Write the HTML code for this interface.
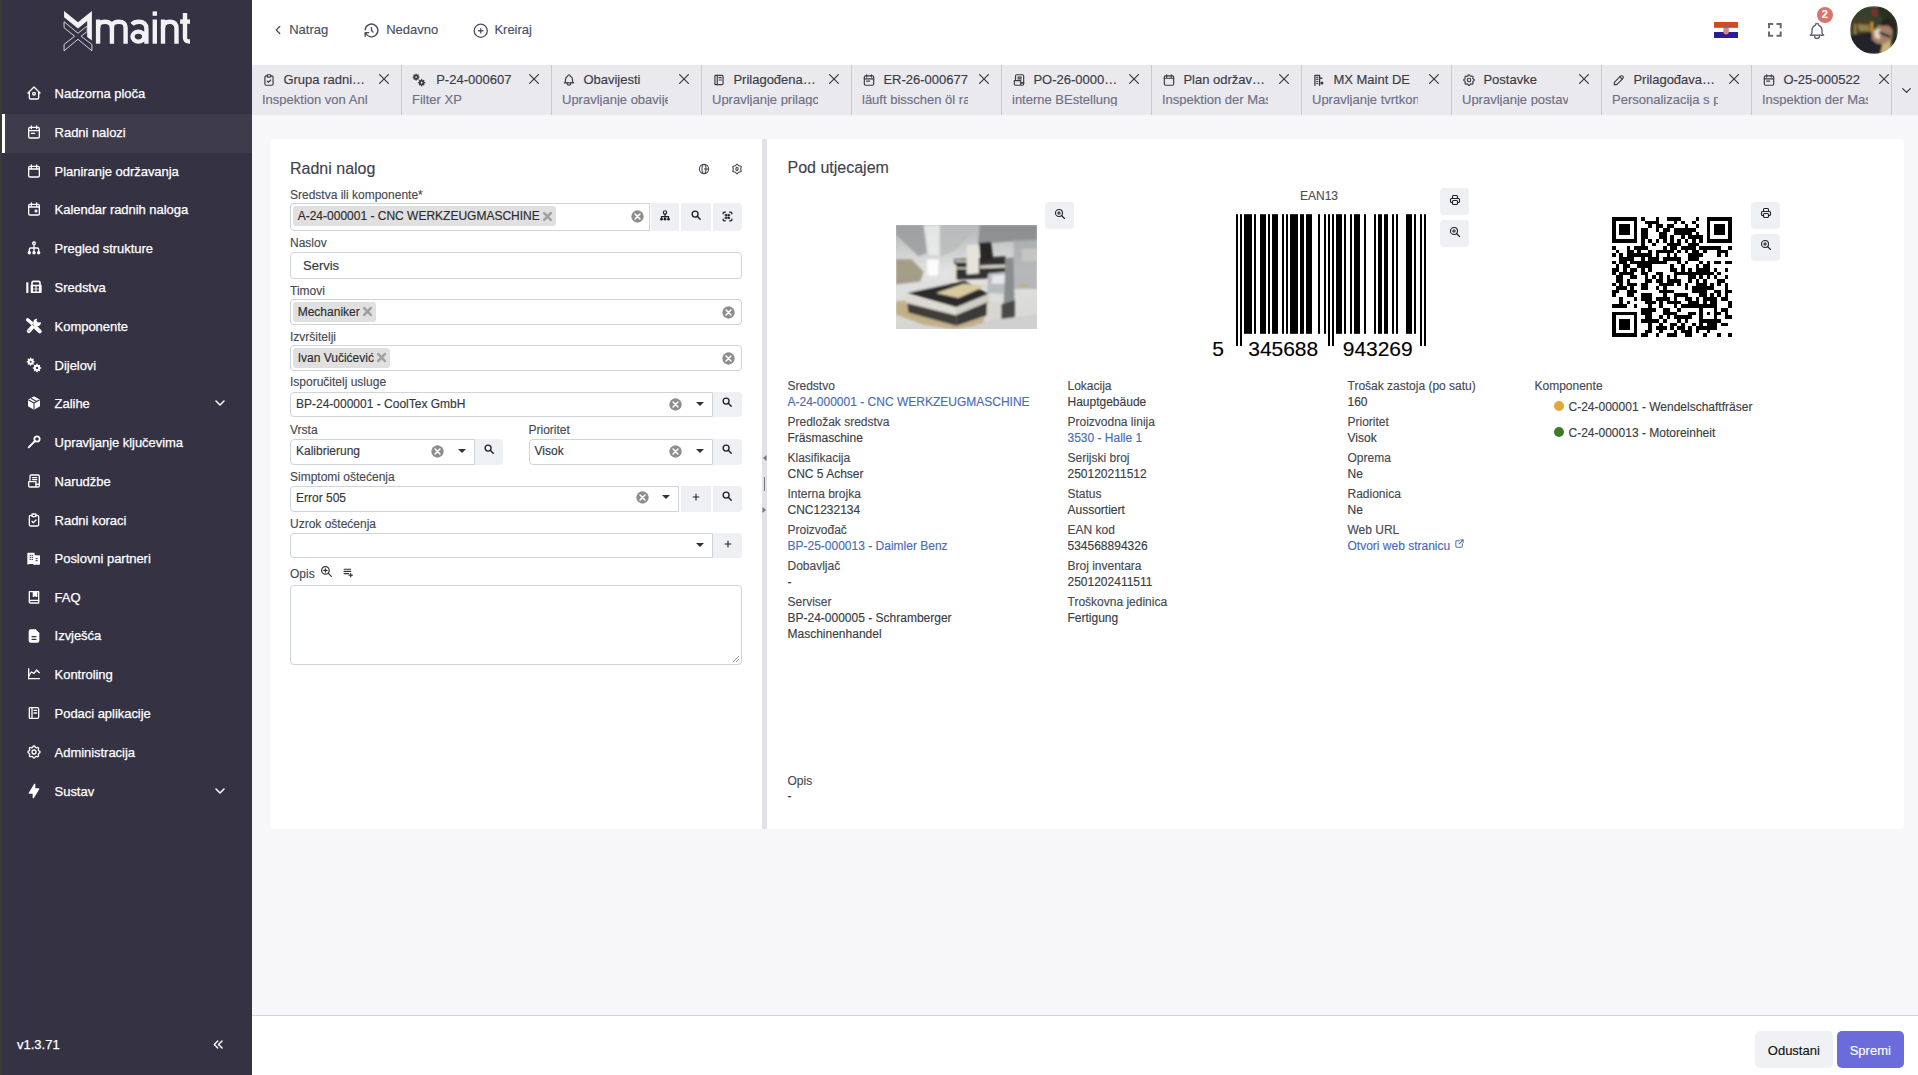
<!DOCTYPE html><html><head><meta charset="utf-8"><title>Radni nalog</title><style>
*{box-sizing:border-box;margin:0;padding:0}
html,body{width:1918px;height:1075px;overflow:hidden;background:#f7f7f9;font-family:"Liberation Sans",sans-serif}
.a{position:absolute}
.t{position:absolute;white-space:nowrap;-webkit-text-stroke:0.15px currentColor}
svg{overflow:visible}
</style></head><body><div class="a" style="left:252.00px;top:0.00px;width:1666.00px;height:65.00px;background:#fff"></div><svg class="a" style="left:271.00px;top:23.30px;" width="14.00" height="14.00" viewBox="0 0 24 24" ><g fill="none" stroke="#4a4e62" stroke-width="2.2" stroke-linecap="round" stroke-linejoin="round"><path d="M15 6l-6 6 6 6"/></g></svg><div class="t " style="left:289.20px;top:23.10px;font-size:13px;line-height:13px;color:#4a4e62;">Natrag</div><svg class="a" style="left:363.00px;top:21.50px;" width="17.00" height="17.00" viewBox="0 0 24 24" ><g fill="none" stroke="#4a4e62" stroke-width="2" stroke-linecap="round" stroke-linejoin="round"><path d="M12 8v4l2 2"/><path d="M3.05 11a9 9 0 1 1 .5 4m-.5 5v-5h5"/></g></svg><div class="t " style="left:386.20px;top:23.10px;font-size:13px;line-height:13px;color:#4a4e62;">Nedavno</div><svg class="a" style="left:471.50px;top:21.50px;" width="17.50" height="17.50" viewBox="0 0 24 24" ><g fill="none" stroke="#4a4e62" stroke-width="1.8" stroke-linecap="round" stroke-linejoin="round"><circle cx="12" cy="12" r="9"/><path d="M9 12h6M12 9v6"/></g></svg><div class="t " style="left:494.40px;top:23.10px;font-size:13px;line-height:13px;color:#4a4e62;">Kreiraj</div><svg class="a" style="left:1714.00px;top:22.00px;" width="24.00" height="16.00" viewBox="0 0 24 16" ><rect x="0" y="0" width="24" height="5.9" fill="#d24a22"/><rect x="0" y="5.9" width="24" height="4.1" fill="#fff"/><rect x="0" y="10" width="24" height="6" fill="#2b1c98"/><path d="M9.4 5.6h5.4v4.2a2.7 2.7 0 0 1-5.4 0z" fill="#e0857a"/><rect x="9.2" y="4.3" width="5.8" height="1.5" rx="0.5" fill="#5a6fb0"/></svg><svg class="a" style="left:1768.00px;top:23.30px;" width="13.70" height="13.70" viewBox="0 0 13.7 13.7" ><path d="M1 5.2V1h4.2M8.5 1h4.2v4.2M12.7 8.5v4.2H8.5M5.2 12.7H1V8.5" fill="none" stroke="#656878" stroke-width="2"/></svg><svg class="a" style="left:1807.00px;top:20.50px;" width="20.00" height="20.00" viewBox="0 0 24 24" ><g fill="none" stroke="#656878" stroke-width="1.7" stroke-linecap="round" stroke-linejoin="round"><path d="M10 5a2 2 0 1 1 4 0 7 7 0 0 1 4 6v3a4 4 0 0 0 2 3H4a4 4 0 0 0 2-3v-3a7 7 0 0 1 4-6"/><path d="M9 17v1a3 3 0 0 0 6 0v-1"/></g></svg><div class="a" style="left:1816.80px;top:6.60px;width:16.60px;height:16.60px;background:#d8746b;border-radius:50%"></div><div class="t " style="left:1821.80px;top:8.99px;font-size:11px;line-height:11px;color:#fff;font-weight:bold">2</div><svg class="a" style="left:1850.10px;top:5.90px;" width="48.00" height="48.00" viewBox="0 0 48 48" ><defs><clipPath id="avc"><circle cx="24" cy="24" r="24"/></clipPath><filter id="avb" x="-10%" y="-10%" width="120%" height="120%"><feGaussianBlur stdDeviation="1.3"/></filter></defs><g clip-path="url(#avc)"><g filter="url(#avb)"><path d="M0.0 0.0 L47.9 0.0 L47.9 27.3 L0.0 27.3Z" fill="#34402f"/><path d="M27.1 0.0 L47.9 0.0 L47.9 19.5 L32.3 14.3Z" fill="#26301f"/><path d="M0.0 13.3 L20.8 11.7 L21.9 28.4 L0.0 29.9Z" fill="#4b3e25"/><path d="M4.2 18.0 L6.2 18.0 L6.2 28.4 L4.2 28.4Z" fill="#9c8a4e"/><path d="M7.8 18.0 L19.8 19.0 L19.8 25.3 L8.9 25.3Z" fill="#8f7f48"/><path d="M20.7 15.9 L23.0 15.9 L23.0 26.3 L20.7 26.3Z" fill="#d89a2a"/><path d="M21.4 3.9 L26.6 2.3 L27.1 10.2 L22.9 9.6Z" fill="#8a2a2a"/><path d="M40.1 22.1 L47.9 19.5 L47.9 43.0 L40.1 43.0Z" fill="#1f3020"/><path d="M29.2 35.7 L40.6 32.6 L40.6 47.7 L29.2 48.2Z" fill="#c9b47c"/><path d="M0.0 29.4 L20.8 26.3 L25.0 32.6 L32.3 38.8 L30.2 48.2 L0.0 48.2Z" fill="#23242b"/><path d="M21.9 25.3 L29.2 19.0 L37.5 18.5 L42.7 23.2 L41.7 32.6 L35.4 37.8 L27.1 37.8 L21.9 33.6Z" fill="#a4806a"/><path d="M24.0 25.3 L29.2 22.1 L31.2 27.3 L29.2 33.6 L25.0 31.5Z" fill="#e5d2bf"/><path d="M29.2 18.0 L35.4 12.8 L42.7 13.3 L46.9 19.5 L45.8 25.3 L42.7 24.2 L38.5 19.5 L31.2 20.1Z" fill="#2b221e"/><path d="M29.2 25.3 L40.6 29.4 L40.1 32.0 L29.2 27.9Z" fill="#2a2a2a"/></g></g></svg><div class="a" style="left:252.00px;top:65.00px;width:1666.00px;height:49.50px;background:#e9e9ee"></div><div class="a" style="left:252px;top:65px;width:150px;height:50px;overflow:hidden"><svg class="a" style="left:10.00px;top:7.60px;" width="14.00" height="14.00" viewBox="0 0 24 24" ><g fill="none" stroke="#3b3b46" stroke-width="2" stroke-linecap="round" stroke-linejoin="round"><path d="M9 5H7a2 2 0 0 0-2 2v12a2 2 0 0 0 2 2h10a2 2 0 0 0 2-2V7a2 2 0 0 0-2-2h-2"/><rect x="9" y="3" width="6" height="4" rx="1"/><path d="M9 14l2 2 4-4"/></g></svg><div class="t " style="left:31.40px;top:7.80px;font-size:13px;line-height:13px;color:#3b3b46;">Grupa radni…</div><svg class="a" style="left:126.80px;top:8.80px;" width="10.00" height="10.00" viewBox="0 0 10 10" ><path d="M0.6 0.6L9.4 9.4M9.4 0.6L0.6 9.4" stroke="#3b3b46" stroke-width="1.25" stroke-linecap="round"/></svg><div class="t" style="left:10px;top:27.60px;width:106px;overflow:hidden;font-size:13px;line-height:13px;color:#6e6e86">Inspektion von Anl</div></div><div class="a" style="left:401.00px;top:65.00px;width:1.00px;height:49.50px;background:#c9c9d1"></div><div class="a" style="left:402px;top:65px;width:150px;height:50px;overflow:hidden"><svg class="a" style="left:10.00px;top:7.60px;" width="14.00" height="14.00" viewBox="0 0 24 24" ><g fill="none" stroke="#3b3b46" stroke-width="2" stroke-linecap="round" stroke-linejoin="round"><circle cx="7" cy="7" r="3" stroke-width="3"/><path d="M7 2v1.5M7 10.5V12M2 7h1.5M10.5 7H12M3.5 3.5l1 1M9.5 9.5l1 1M3.5 10.5l1-1M9.5 4.5l1-1" stroke-width="2.2"/><circle cx="16.5" cy="16.5" r="3.2" stroke-width="3"/><path d="M16.5 11v1.5M16.5 20.5V22M11 16.5h1.5M20.5 16.5H22M12.8 12.8l1 1M19.2 19.2l1 1M12.8 20.2l1-1M19.2 13.8l1-1" stroke-width="2.2"/></g></svg><div class="t " style="left:34.20px;top:7.80px;font-size:13px;line-height:13px;color:#3b3b46;">P-24-000607</div><svg class="a" style="left:126.80px;top:8.80px;" width="10.00" height="10.00" viewBox="0 0 10 10" ><path d="M0.6 0.6L9.4 9.4M9.4 0.6L0.6 9.4" stroke="#3b3b46" stroke-width="1.25" stroke-linecap="round"/></svg><div class="t" style="left:10px;top:27.60px;width:106px;overflow:hidden;font-size:13px;line-height:13px;color:#6e6e86">Filter XP</div></div><div class="a" style="left:551.00px;top:65.00px;width:1.00px;height:49.50px;background:#c9c9d1"></div><div class="a" style="left:552px;top:65px;width:150px;height:50px;overflow:hidden"><svg class="a" style="left:10.00px;top:7.60px;" width="14.00" height="14.00" viewBox="0 0 24 24" ><g fill="none" stroke="#3b3b46" stroke-width="2" stroke-linecap="round" stroke-linejoin="round"><path d="M10 5a2 2 0 1 1 4 0 7 7 0 0 1 4 6v3a4 4 0 0 0 2 3H4a4 4 0 0 0 2-3v-3a7 7 0 0 1 4-6"/><path d="M9 17v1a3 3 0 0 0 6 0v-1"/></g></svg><div class="t " style="left:31.40px;top:7.80px;font-size:13px;line-height:13px;color:#3b3b46;">Obavijesti</div><svg class="a" style="left:126.80px;top:8.80px;" width="10.00" height="10.00" viewBox="0 0 10 10" ><path d="M0.6 0.6L9.4 9.4M9.4 0.6L0.6 9.4" stroke="#3b3b46" stroke-width="1.25" stroke-linecap="round"/></svg><div class="t" style="left:10px;top:27.60px;width:106px;overflow:hidden;font-size:13px;line-height:13px;color:#6e6e86">Upravljanje obavije</div></div><div class="a" style="left:701.00px;top:65.00px;width:1.00px;height:49.50px;background:#c9c9d1"></div><div class="a" style="left:702px;top:65px;width:150px;height:50px;overflow:hidden"><svg class="a" style="left:10.00px;top:7.60px;" width="14.00" height="14.00" viewBox="0 0 24 24" ><g fill="none" stroke="#3b3b46" stroke-width="2" stroke-linecap="round" stroke-linejoin="round"><path d="M6 4h11a2 2 0 0 1 2 2v12a2 2 0 0 1-2 2H6a1 1 0 0 1-1-1V5a1 1 0 0 1 1-1z"/><path d="M9 4v16M12 8h4M12 12h4"/></g></svg><div class="t " style="left:31.40px;top:7.80px;font-size:13px;line-height:13px;color:#3b3b46;">Prilagođena…</div><svg class="a" style="left:126.80px;top:8.80px;" width="10.00" height="10.00" viewBox="0 0 10 10" ><path d="M0.6 0.6L9.4 9.4M9.4 0.6L0.6 9.4" stroke="#3b3b46" stroke-width="1.25" stroke-linecap="round"/></svg><div class="t" style="left:10px;top:27.60px;width:106px;overflow:hidden;font-size:13px;line-height:13px;color:#6e6e86">Upravljanje prilagc</div></div><div class="a" style="left:851.00px;top:65.00px;width:1.00px;height:49.50px;background:#c9c9d1"></div><div class="a" style="left:852px;top:65px;width:150px;height:50px;overflow:hidden"><svg class="a" style="left:10.00px;top:7.60px;" width="14.00" height="14.00" viewBox="0 0 24 24" ><g fill="none" stroke="#3b3b46" stroke-width="2" stroke-linecap="round" stroke-linejoin="round"><rect x="4" y="5" width="16" height="16" rx="2"/><path d="M16 3v4M8 3v4M4 10h16M8 14h5"/></g></svg><div class="t " style="left:31.40px;top:7.80px;font-size:13px;line-height:13px;color:#3b3b46;">ER-26-000677</div><svg class="a" style="left:126.80px;top:8.80px;" width="10.00" height="10.00" viewBox="0 0 10 10" ><path d="M0.6 0.6L9.4 9.4M9.4 0.6L0.6 9.4" stroke="#3b3b46" stroke-width="1.25" stroke-linecap="round"/></svg><div class="t" style="left:10px;top:27.60px;width:106px;overflow:hidden;font-size:13px;line-height:13px;color:#6e6e86">läuft bisschen öl ra</div></div><div class="a" style="left:1001.00px;top:65.00px;width:1.00px;height:49.50px;background:#c9c9d1"></div><div class="a" style="left:1002px;top:65px;width:150px;height:50px;overflow:hidden"><svg class="a" style="left:10.00px;top:7.60px;" width="14.00" height="14.00" viewBox="0 0 24 24" ><g fill="none" stroke="#3b3b46" stroke-width="2" stroke-linecap="round" stroke-linejoin="round"><path d="M17 17h3V5a2 2 0 0 0-2-2H8a2 2 0 0 0-2 2v6"/><path d="M4 13h11v6a2 2 0 0 1-2 2H6a2 2 0 0 1-2-2z"/><path d="M10 7h6M10 10h6"/><path d="M15 17h5v2a2 2 0 0 1-2 2h-3"/></g></svg><div class="t " style="left:31.40px;top:7.80px;font-size:13px;line-height:13px;color:#3b3b46;">PO-26-0000…</div><svg class="a" style="left:126.80px;top:8.80px;" width="10.00" height="10.00" viewBox="0 0 10 10" ><path d="M0.6 0.6L9.4 9.4M9.4 0.6L0.6 9.4" stroke="#3b3b46" stroke-width="1.25" stroke-linecap="round"/></svg><div class="t" style="left:10px;top:27.60px;width:106px;overflow:hidden;font-size:13px;line-height:13px;color:#6e6e86">interne BEstellung</div></div><div class="a" style="left:1151.00px;top:65.00px;width:1.00px;height:49.50px;background:#c9c9d1"></div><div class="a" style="left:1152px;top:65px;width:150px;height:50px;overflow:hidden"><svg class="a" style="left:10.00px;top:7.60px;" width="14.00" height="14.00" viewBox="0 0 24 24" ><g fill="none" stroke="#3b3b46" stroke-width="2" stroke-linecap="round" stroke-linejoin="round"><rect x="4" y="5" width="16" height="16" rx="2"/><path d="M16 3v4M8 3v4M4 9h16"/></g></svg><div class="t " style="left:31.40px;top:7.80px;font-size:13px;line-height:13px;color:#3b3b46;">Plan održav…</div><svg class="a" style="left:126.80px;top:8.80px;" width="10.00" height="10.00" viewBox="0 0 10 10" ><path d="M0.6 0.6L9.4 9.4M9.4 0.6L0.6 9.4" stroke="#3b3b46" stroke-width="1.25" stroke-linecap="round"/></svg><div class="t" style="left:10px;top:27.60px;width:106px;overflow:hidden;font-size:13px;line-height:13px;color:#6e6e86">Inspektion der Mas</div></div><div class="a" style="left:1301.00px;top:65.00px;width:1.00px;height:49.50px;background:#c9c9d1"></div><div class="a" style="left:1302px;top:65px;width:150px;height:50px;overflow:hidden"><svg class="a" style="left:10.00px;top:7.60px;" width="14.00" height="14.00" viewBox="0 0 24 24" ><g fill="none" stroke="#3b3b46" stroke-width="2" stroke-linecap="round" stroke-linejoin="round"><path d="M5 21V4h8v17M13 9h4" stroke-width="2.2"/><path d="M8 7.5h2M8 11h2M8 14.5h2M8 18h2" stroke-width="2"/><circle cx="17" cy="17" r="2.6" fill="#3b3b46" stroke="none"/></g></svg><div class="t " style="left:31.40px;top:7.80px;font-size:13px;line-height:13px;color:#3b3b46;">MX Maint DE</div><svg class="a" style="left:126.80px;top:8.80px;" width="10.00" height="10.00" viewBox="0 0 10 10" ><path d="M0.6 0.6L9.4 9.4M9.4 0.6L0.6 9.4" stroke="#3b3b46" stroke-width="1.25" stroke-linecap="round"/></svg><div class="t" style="left:10px;top:27.60px;width:106px;overflow:hidden;font-size:13px;line-height:13px;color:#6e6e86">Upravljanje tvrtkon</div></div><div class="a" style="left:1451.00px;top:65.00px;width:1.00px;height:49.50px;background:#c9c9d1"></div><div class="a" style="left:1452px;top:65px;width:150px;height:50px;overflow:hidden"><svg class="a" style="left:10.00px;top:7.60px;" width="14.00" height="14.00" viewBox="0 0 24 24" ><g fill="none" stroke="#3b3b46" stroke-width="2" stroke-linecap="round" stroke-linejoin="round"><path d="M10.3 4.3c.4-1.8 3-1.8 3.4 0a1.7 1.7 0 0 0 2.6 1.1c1.5-.9 3.3.8 2.4 2.4a1.7 1.7 0 0 0 1 2.6c1.8.4 1.8 3 0 3.4a1.7 1.7 0 0 0-1 2.6c.9 1.5-.8 3.3-2.4 2.4a1.7 1.7 0 0 0-2.6 1c-.4 1.8-3 1.8-3.4 0a1.7 1.7 0 0 0-2.6-1c-1.5.9-3.3-.8-2.4-2.4a1.7 1.7 0 0 0-1-2.6c-1.8-.4-1.8-3 0-3.4a1.7 1.7 0 0 0 1-2.6c-.9-1.5.8-3.3 2.4-2.4 1 .6 2.3.1 2.6-1.1z"/><circle cx="12" cy="12" r="3"/></g></svg><div class="t " style="left:31.40px;top:7.80px;font-size:13px;line-height:13px;color:#3b3b46;">Postavke</div><svg class="a" style="left:126.80px;top:8.80px;" width="10.00" height="10.00" viewBox="0 0 10 10" ><path d="M0.6 0.6L9.4 9.4M9.4 0.6L0.6 9.4" stroke="#3b3b46" stroke-width="1.25" stroke-linecap="round"/></svg><div class="t" style="left:10px;top:27.60px;width:106px;overflow:hidden;font-size:13px;line-height:13px;color:#6e6e86">Upravljanje postav</div></div><div class="a" style="left:1601.00px;top:65.00px;width:1.00px;height:49.50px;background:#c9c9d1"></div><div class="a" style="left:1602px;top:65px;width:150px;height:50px;overflow:hidden"><svg class="a" style="left:10.00px;top:7.60px;" width="14.00" height="14.00" viewBox="0 0 24 24" ><g fill="none" stroke="#3b3b46" stroke-width="2" stroke-linecap="round" stroke-linejoin="round"><path d="M4 20h4L18.5 9.5a2.8 2.8 0 0 0-4-4L4 16v4"/><path d="M13.5 6.5l4 4"/></g></svg><div class="t " style="left:31.40px;top:7.80px;font-size:13px;line-height:13px;color:#3b3b46;">Prilagođava…</div><svg class="a" style="left:126.80px;top:8.80px;" width="10.00" height="10.00" viewBox="0 0 10 10" ><path d="M0.6 0.6L9.4 9.4M9.4 0.6L0.6 9.4" stroke="#3b3b46" stroke-width="1.25" stroke-linecap="round"/></svg><div class="t" style="left:10px;top:27.60px;width:106px;overflow:hidden;font-size:13px;line-height:13px;color:#6e6e86">Personalizacija s p</div></div><div class="a" style="left:1751.00px;top:65.00px;width:1.00px;height:49.50px;background:#c9c9d1"></div><div class="a" style="left:1752px;top:65px;width:140px;height:50px;overflow:hidden"><svg class="a" style="left:10.00px;top:7.60px;" width="14.00" height="14.00" viewBox="0 0 24 24" ><g fill="none" stroke="#3b3b46" stroke-width="2" stroke-linecap="round" stroke-linejoin="round"><rect x="4" y="5" width="16" height="16" rx="2"/><path d="M16 3v4M8 3v4M4 10h16M8 14h5"/></g></svg><div class="t " style="left:31.40px;top:7.80px;font-size:13px;line-height:13px;color:#3b3b46;">O-25-000522</div><svg class="a" style="left:126.80px;top:8.80px;" width="10.00" height="10.00" viewBox="0 0 10 10" ><path d="M0.6 0.6L9.4 9.4M9.4 0.6L0.6 9.4" stroke="#3b3b46" stroke-width="1.25" stroke-linecap="round"/></svg><div class="t" style="left:10px;top:27.60px;width:106px;overflow:hidden;font-size:13px;line-height:13px;color:#6e6e86">Inspektion der Mas</div></div><div class="a" style="left:1891.00px;top:65.00px;width:1.00px;height:49.50px;background:#c9c9d1"></div><svg class="a" style="left:1899.00px;top:83.00px;" width="15.00" height="15.00" viewBox="0 0 24 24" ><g fill="none" stroke="#3b3b46" stroke-width="2" stroke-linecap="round" stroke-linejoin="round"><path d="M6 9l6 6 6-6"/></g></svg><div class="a" style="left:270.00px;top:139.00px;width:492.00px;height:690.00px;background:#fff;border-radius:4px 0 0 4px"></div><div class="t " style="left:290.00px;top:160.66px;font-size:16px;line-height:16px;color:#3f434a;">Radni nalog</div><svg class="a" style="left:698.40px;top:163.00px;" width="12.00" height="12.00" viewBox="0 0 12 12" ><g fill="none" stroke="#4a4e55" stroke-width="1.15"><circle cx="6" cy="6" r="4.6"/><ellipse cx="6" cy="6" rx="2" ry="4.6"/><path d="M6 6H10.6"/></g></svg><svg class="a" style="left:731.40px;top:163.00px;" width="12.00" height="12.00" viewBox="0 0 12 12" ><g fill="none" stroke="#4a4e55" stroke-width="1.15" stroke-linejoin="round"><path d="M6.00 1.10 L7.85 2.80 L10.24 3.55 L9.70 6.00 L10.24 8.45 L7.85 9.20 L6.00 10.90 L4.15 9.20 L1.76 8.45 L2.30 6.00 L1.76 3.55 L4.15 2.80Z"/><ellipse cx="6" cy="6" rx="1.1" ry="1.6"/></g></svg><div class="t " style="left:290.00px;top:188.64px;font-size:12px;line-height:12px;color:#474a52;">Sredstva ili komponente*</div><div class="a" style="left:290.00px;top:203.00px;width:360.00px;height:28.00px;background:#fff;border:1px solid #cfd3da;border-radius:4px 0 0 4px"></div><div class="a" style="left:293.20px;top:206.30px;width:262.50px;height:19.50px;background:#e0e0e0;border-radius:3px"></div><div class="t " style="left:297.70px;top:209.74px;font-size:12px;line-height:12px;color:#2b2b2b;">A-24-000001 - CNC WERKZEUGMASCHINE</div><svg class="a" style="left:542.90px;top:211.55px;" width="9.00" height="9.00" viewBox="0 0 9 9" ><path d="M1.2 1.2l6.6 6.6M7.8 1.2l-6.6 6.6" stroke="#a0a0a0" stroke-width="2.6" stroke-linecap="round"/></svg><svg class="a" style="left:630.50px;top:210.00px;" width="13.00" height="13.00" viewBox="0 0 12 12" ><circle cx="6" cy="6" r="5.7" fill="#8d8d8d"/><path d="M3.75 3.75l4.5 4.5M8.25 3.75l-4.5 4.5" stroke="#fff" stroke-width="1.45" stroke-linecap="round"/></svg><div class="a" style="left:650.60px;top:203.00px;width:28.40px;height:28.00px;background:#eff0f4;border-radius:0"></div><svg class="a" style="left:658.80px;top:208.60px;" width="12.00" height="12.00" viewBox="0 0 12 12" ><g fill="none" stroke="#1f2125" stroke-width="1.15"><circle cx="6" cy="3.4" r="1.65"/><path d="M6 5.1V9.6M2.5 9.8V7.6H9.5V9.8"/></g><g fill="#1f2125"><circle cx="2.5" cy="10.2" r="1.35"/><circle cx="6" cy="10.2" r="1.35"/><circle cx="9.5" cy="10.2" r="1.35"/></g></svg><div class="a" style="left:681.00px;top:203.00px;width:30.00px;height:28.00px;background:#eff0f4;border-radius:0"></div><svg class="a" style="left:690.50px;top:209.70px;" width="10.00" height="10.00" viewBox="0 0 10 10" ><circle cx="4.1" cy="4.1" r="2.95" fill="none" stroke="#1f2125" stroke-width="1.35"/><path d="M6.3 6.3L9.2 9.2" stroke="#1f2125" stroke-width="1.45" stroke-linecap="round"/></svg><div class="a" style="left:713.00px;top:203.00px;width:28.80px;height:28.00px;background:#eff0f4;border-radius:0 4px 4px 0"></div><svg class="a" style="left:720.90px;top:209.80px;" width="13.00" height="13.00" viewBox="0 0 24 24" ><g fill="none" stroke="#1f2125" stroke-width="2.4" stroke-linecap="round" stroke-linejoin="round"><path d="M4 7V6a2 2 0 0 1 2-2h2M4 17v1a2 2 0 0 0 2 2h2M16 4h2a2 2 0 0 1 2 2v1M16 20h2a2 2 0 0 0 2-2v-1"/><path d="M8 8h3v3H8zM13 8h3v3h-3zM8 13h3v3H8zM13 13h3v3h-3z" fill="#1f2125" stroke-width="1"/></g></svg><div class="t " style="left:290.00px;top:236.84px;font-size:12px;line-height:12px;color:#474a52;">Naslov</div><div class="a" style="left:290.00px;top:251.50px;width:452.00px;height:27.00px;background:#fff;border:1px solid #cfd3da;border-radius:4px"></div><div class="t " style="left:303.00px;top:258.60px;font-size:13px;line-height:13px;color:#34373d;">Servis</div><div class="t " style="left:290.00px;top:285.24px;font-size:12px;line-height:12px;color:#474a52;">Timovi</div><div class="a" style="left:290.00px;top:299.40px;width:452.00px;height:25.50px;background:#fff;border:1px solid #cfd3da;border-radius:4px"></div><div class="a" style="left:293.20px;top:302.20px;width:82.50px;height:19.50px;background:#e0e0e0;border-radius:3px"></div><div class="t " style="left:297.70px;top:305.64px;font-size:12px;line-height:12px;color:#2b2b2b;">Mechaniker</div><svg class="a" style="left:362.90px;top:307.45px;" width="9.00" height="9.00" viewBox="0 0 9 9" ><path d="M1.2 1.2l6.6 6.6M7.8 1.2l-6.6 6.6" stroke="#a0a0a0" stroke-width="2.6" stroke-linecap="round"/></svg><svg class="a" style="left:722.30px;top:305.60px;" width="13.00" height="13.00" viewBox="0 0 12 12" ><circle cx="6" cy="6" r="5.7" fill="#8d8d8d"/><path d="M3.75 3.75l4.5 4.5M8.25 3.75l-4.5 4.5" stroke="#fff" stroke-width="1.45" stroke-linecap="round"/></svg><div class="t " style="left:290.00px;top:330.64px;font-size:12px;line-height:12px;color:#474a52;">Izvršitelji</div><div class="a" style="left:290.00px;top:345.40px;width:452.00px;height:25.50px;background:#fff;border:1px solid #cfd3da;border-radius:4px"></div><div class="a" style="left:293.20px;top:348.20px;width:96.50px;height:19.50px;background:#e0e0e0;border-radius:3px"></div><div class="t " style="left:297.70px;top:351.64px;font-size:12px;line-height:12px;color:#2b2b2b;">Ivan Vučićević</div><svg class="a" style="left:376.90px;top:353.45px;" width="9.00" height="9.00" viewBox="0 0 9 9" ><path d="M1.2 1.2l6.6 6.6M7.8 1.2l-6.6 6.6" stroke="#a0a0a0" stroke-width="2.6" stroke-linecap="round"/></svg><svg class="a" style="left:722.30px;top:351.50px;" width="13.00" height="13.00" viewBox="0 0 12 12" ><circle cx="6" cy="6" r="5.7" fill="#8d8d8d"/><path d="M3.75 3.75l4.5 4.5M8.25 3.75l-4.5 4.5" stroke="#fff" stroke-width="1.45" stroke-linecap="round"/></svg><div class="t " style="left:290.00px;top:376.44px;font-size:12px;line-height:12px;color:#474a52;">Isporučitelj usluge</div><div class="a" style="left:290.00px;top:391.70px;width:423.00px;height:25.80px;background:#fff;border:1px solid #cfd3da;border-radius:4px 0 0 4px"></div><div class="t " style="left:296.00px;top:398.24px;font-size:12px;line-height:12px;color:#34373d;">BP-24-000001 - CoolTex GmbH</div><svg class="a" style="left:669.10px;top:397.50px;" width="13.00" height="13.00" viewBox="0 0 12 12" ><circle cx="6" cy="6" r="5.7" fill="#8d8d8d"/><path d="M3.75 3.75l4.5 4.5M8.25 3.75l-4.5 4.5" stroke="#fff" stroke-width="1.45" stroke-linecap="round"/></svg><svg class="a" style="left:696.00px;top:401.60px;" width="8.00" height="4.00" viewBox="0 0 8 4" ><path d="M0 0h8l-4 4z" fill="#333"/></svg><div class="a" style="left:713.00px;top:391.70px;width:29.00px;height:25.80px;background:#eff0f4;border-radius:0 4px 4px 0"></div><svg class="a" style="left:722.00px;top:397.30px;" width="10.00" height="10.00" viewBox="0 0 10 10" ><circle cx="4.1" cy="4.1" r="2.95" fill="none" stroke="#1f2125" stroke-width="1.35"/><path d="M6.3 6.3L9.2 9.2" stroke="#1f2125" stroke-width="1.45" stroke-linecap="round"/></svg><div class="t " style="left:290.00px;top:423.54px;font-size:12px;line-height:12px;color:#474a52;">Vrsta</div><div class="a" style="left:290.00px;top:438.50px;width:184.50px;height:26.00px;background:#fff;border:1px solid #cfd3da;border-radius:4px 0 0 4px"></div><div class="t " style="left:296.00px;top:445.04px;font-size:12px;line-height:12px;color:#34373d;">Kalibrierung</div><svg class="a" style="left:431.10px;top:444.50px;" width="13.00" height="13.00" viewBox="0 0 12 12" ><circle cx="6" cy="6" r="5.7" fill="#8d8d8d"/><path d="M3.75 3.75l4.5 4.5M8.25 3.75l-4.5 4.5" stroke="#fff" stroke-width="1.45" stroke-linecap="round"/></svg><svg class="a" style="left:457.50px;top:448.50px;" width="8.00" height="4.00" viewBox="0 0 8 4" ><path d="M0 0h8l-4 4z" fill="#333"/></svg><div class="a" style="left:475.20px;top:438.50px;width:28.20px;height:26.00px;background:#eff0f4;border-radius:0 4px 4px 0"></div><svg class="a" style="left:483.80px;top:444.20px;" width="10.00" height="10.00" viewBox="0 0 10 10" ><circle cx="4.1" cy="4.1" r="2.95" fill="none" stroke="#1f2125" stroke-width="1.35"/><path d="M6.3 6.3L9.2 9.2" stroke="#1f2125" stroke-width="1.45" stroke-linecap="round"/></svg><div class="t " style="left:528.50px;top:423.54px;font-size:12px;line-height:12px;color:#474a52;">Prioritet</div><div class="a" style="left:528.50px;top:438.50px;width:184.50px;height:26.00px;background:#fff;border:1px solid #cfd3da;border-radius:4px 0 0 4px"></div><div class="t " style="left:534.50px;top:445.04px;font-size:12px;line-height:12px;color:#34373d;">Visok</div><svg class="a" style="left:669.10px;top:444.50px;" width="13.00" height="13.00" viewBox="0 0 12 12" ><circle cx="6" cy="6" r="5.7" fill="#8d8d8d"/><path d="M3.75 3.75l4.5 4.5M8.25 3.75l-4.5 4.5" stroke="#fff" stroke-width="1.45" stroke-linecap="round"/></svg><svg class="a" style="left:696.00px;top:448.50px;" width="8.00" height="4.00" viewBox="0 0 8 4" ><path d="M0 0h8l-4 4z" fill="#333"/></svg><div class="a" style="left:713.00px;top:438.50px;width:29.00px;height:26.00px;background:#eff0f4;border-radius:0 4px 4px 0"></div><svg class="a" style="left:722.00px;top:444.20px;" width="10.00" height="10.00" viewBox="0 0 10 10" ><circle cx="4.1" cy="4.1" r="2.95" fill="none" stroke="#1f2125" stroke-width="1.35"/><path d="M6.3 6.3L9.2 9.2" stroke="#1f2125" stroke-width="1.45" stroke-linecap="round"/></svg><div class="t " style="left:290.00px;top:470.64px;font-size:12px;line-height:12px;color:#474a52;">Simptomi oštećenja</div><div class="a" style="left:290.00px;top:485.50px;width:389.00px;height:26.00px;background:#fff;border:1px solid #cfd3da;border-radius:4px 0 0 4px"></div><div class="t " style="left:296.00px;top:492.04px;font-size:12px;line-height:12px;color:#34373d;">Error 505</div><svg class="a" style="left:635.50px;top:491.30px;" width="13.00" height="13.00" viewBox="0 0 12 12" ><circle cx="6" cy="6" r="5.7" fill="#8d8d8d"/><path d="M3.75 3.75l4.5 4.5M8.25 3.75l-4.5 4.5" stroke="#fff" stroke-width="1.45" stroke-linecap="round"/></svg><svg class="a" style="left:662.00px;top:495.30px;" width="8.00" height="4.00" viewBox="0 0 8 4" ><path d="M0 0h8l-4 4z" fill="#333"/></svg><div class="a" style="left:681.00px;top:485.50px;width:29.80px;height:26.00px;background:#eff0f4;border-radius:0"></div><svg class="a" style="left:690.90px;top:492.00px;" width="10.00" height="10.00" viewBox="0 0 24 24" ><g fill="none" stroke="#1f2125" stroke-width="2.6" stroke-linecap="round" stroke-linejoin="round"><path d="M12 5v14M5 12h14"/></g></svg><div class="a" style="left:713.00px;top:485.50px;width:29.00px;height:26.00px;background:#eff0f4;border-radius:0 4px 4px 0"></div><svg class="a" style="left:722.00px;top:491.20px;" width="10.00" height="10.00" viewBox="0 0 10 10" ><circle cx="4.1" cy="4.1" r="2.95" fill="none" stroke="#1f2125" stroke-width="1.35"/><path d="M6.3 6.3L9.2 9.2" stroke="#1f2125" stroke-width="1.45" stroke-linecap="round"/></svg><div class="t " style="left:290.00px;top:517.84px;font-size:12px;line-height:12px;color:#474a52;">Uzrok oštećenja</div><div class="a" style="left:290.00px;top:532.60px;width:423.00px;height:25.60px;background:#fff;border:1px solid #cfd3da;border-radius:4px 0 0 4px"></div><svg class="a" style="left:696.00px;top:542.60px;" width="8.00" height="4.00" viewBox="0 0 8 4" ><path d="M0 0h8l-4 4z" fill="#333"/></svg><div class="a" style="left:713.00px;top:532.60px;width:29.00px;height:25.60px;background:#eff0f4;border-radius:0 4px 4px 0"></div><svg class="a" style="left:722.50px;top:539.00px;" width="10.00" height="10.00" viewBox="0 0 24 24" ><g fill="none" stroke="#1f2125" stroke-width="2.6" stroke-linecap="round" stroke-linejoin="round"><path d="M12 5v14M5 12h14"/></g></svg><div class="t " style="left:290.00px;top:568.04px;font-size:12px;line-height:12px;color:#474a52;">Opis</div><svg class="a" style="left:320.00px;top:565.00px;" width="13.00" height="13.00" viewBox="0 0 24 24" ><g fill="none" stroke="#333" stroke-width="2.3" stroke-linecap="round" stroke-linejoin="round"><circle cx="10" cy="10" r="7"/><path d="M21 21l-6-6M7 10h6M10 7v6"/></g></svg><svg class="a" style="left:341.50px;top:565.50px;" width="13.00" height="13.00" viewBox="0 0 24 24" ><g fill="none" stroke="#333" stroke-width="2.3" stroke-linecap="round" stroke-linejoin="round"><path d="M4 6h12M4 10h12M4 14h8M16 14v6M13 17h6"/></g></svg><div class="a" style="left:290.00px;top:585.20px;width:452.00px;height:79.80px;background:#fff;border:1px solid #cfd3da;border-radius:4px"></div><svg class="a" style="left:732.00px;top:655.00px;" width="8.00" height="8.00" viewBox="0 0 8 8" ><path d="M7 1L1 7M7 4L4 7" stroke="#888" stroke-width="0.9"/></svg><div class="a" style="left:762.00px;top:139.00px;width:5.00px;height:690.00px;background:#e2e2e6"></div><svg class="a" style="left:762.00px;top:453.50px;" width="5.00" height="8.00" viewBox="0 0 5 8" ><path d="M4.5 1L1 4l3.5 3z" fill="#777"/></svg><div class="a" style="left:763.60px;top:477.00px;width:1.50px;height:14.00px;background:#777"></div><svg class="a" style="left:762.00px;top:505.50px;" width="5.00" height="8.00" viewBox="0 0 5 8" ><path d="M0.5 1L4 4 0.5 7z" fill="#777"/></svg><div class="a" style="left:767.00px;top:139.00px;width:1137.00px;height:690.00px;background:#fff;border-radius:0 4px 4px 0"></div><div class="t " style="left:787.50px;top:160.26px;font-size:16px;line-height:16px;color:#3f434a;">Pod utjecajem</div><svg class="a" style="left:896.10px;top:224.60px;overflow:hidden" width="141.00" height="104.50" viewBox="0 0 141 104.5" ><defs><linearGradient id="pbg" x1="0" y1="0" x2="0" y2="1"><stop offset="0" stop-color="#b5b7b8"/><stop offset="0.45" stop-color="#e2e3e2"/><stop offset="1" stop-color="#d5d5d2"/></linearGradient><filter id="pbl"><feGaussianBlur stdDeviation="1.0"/></filter></defs><rect x="0" y="0" width="141" height="104.5" fill="url(#pbg)"/><g filter="url(#pbl)"><path d="M0.0 0.0 L27.6 0.0 L30.7 28.1 L22.5 31.2 L0.0 9.7Z" fill="#9a9c9e" opacity="0.85"/><path d="M44.0 0.0 L83.9 0.0 L58.3 26.1 L45.0 31.2Z" fill="#b9bbbc" opacity="0.85"/><path d="M27.6 0.0 L44.0 0.0 L43.0 30.2 L32.7 30.2Z" fill="#e9eaea" opacity="0.9"/><path d="M83.9 0.0 L141.2 0.0 L141.2 14.8 L94.1 17.9 L81.8 21.0Z" fill="#85888b" opacity="0.85"/><path d="M117.6 14.8 L141.2 14.8 L141.2 63.9 L117.6 63.9Z" fill="#a3a6a8" opacity="0.7"/><path d="M125.8 24.0 L141.2 24.0 L141.2 36.3 L125.8 36.3Z" fill="#c9c9c5" opacity="0.8"/><path d="M0.0 34.3 L15.3 34.3 L27.6 46.5 L23.5 59.8 L0.0 59.8Z" fill="#9a9278" opacity="0.85"/><path d="M30.7 34.3 L43.0 34.3 L41.9 50.6 L31.7 50.6Z" fill="#ffffff" opacity="0.9"/><path d="M0.0 59.8 L37.8 54.7 L56.3 58.8 L9.2 69.0 L0.0 79.3Z" fill="#dedede" opacity="1"/><path d="M0.0 76.2 L17.4 75.2 L48.1 87.5 L89.0 89.5 L86.9 99.7 L58.3 104.3 L27.6 99.7 L0.0 89.5Z" fill="#c2b08a" opacity="1"/><path d="M9.2 69.0 L60.4 82.3 L60.4 90.5 L10.2 78.3Z" fill="#dcdad2" opacity="1"/><path d="M11.3 68.0 L68.5 55.7 L92.6 69.0 L60.4 82.3Z" fill="#2c2c2c" opacity="1"/><path d="M60.4 89.5 L93.1 76.2 L93.1 89.5 L60.4 100.8Z" fill="#3b3b3a" opacity="1"/><path d="M60.4 82.3 L92.6 69.0 L93.1 76.2 L60.4 90.0Z" fill="#cfcdc4" opacity="1"/><path d="M11.3 78.3 L60.4 90.5 L60.4 100.8 L12.3 87.5Z" fill="#3f3e3a" opacity="1"/><path d="M39.9 68.0 L67.5 58.8 L90.0 60.9 L62.4 73.1Z" fill="#d9c99e" opacity="1"/><path d="M58.3 34.3 L109.5 31.2 L109.5 52.7 L58.3 54.7Z" fill="#303030" opacity="1"/><path d="M55.2 39.4 L60.4 39.4 L60.4 56.8 L55.2 56.8Z" fill="#e4e1d6" opacity="1"/><path d="M59.3 35.3 L74.7 35.3 L74.7 37.3 L59.3 37.3Z" fill="#ddd9cc" opacity="1"/><path d="M59.3 42.5 L74.7 42.5 L74.7 44.0 L59.3 44.0Z" fill="#ddd9cc" opacity="1"/><path d="M83.9 40.4 L109.5 39.4 L109.5 42.5 L83.9 43.5Z" fill="#d6d3c8" opacity="1"/><path d="M70.6 19.9 L82.9 19.4 L82.9 48.6 L70.6 49.6Z" fill="#e6e3d9" opacity="1"/><path d="M82.9 17.9 L95.1 16.9 L97.2 34.3 L84.9 36.3Z" fill="#262626" opacity="1"/><path d="M92.1 48.6 L111.5 46.5 L110.5 69.0 L91.0 68.0Z" fill="#b9bcbe" opacity="1"/><path d="M96.2 50.6 L109.5 49.6 L108.9 58.8 L95.6 58.8Z" fill="#e4e7e8" opacity="1"/><path d="M109.5 33.2 L117.6 32.2 L118.7 89.5 L107.4 91.6Z" fill="#8a8d8f" opacity="1"/><path d="M91.0 77.2 L106.4 78.3 L105.9 95.6 L90.5 93.6Z" fill="#d7d6cf" opacity="1"/><path d="M105.4 79.3 L118.7 75.2 L118.7 97.7 L105.4 98.7Z" fill="#4a4a48" opacity="1"/><path d="M93.1 95.6 L141.2 89.5 L141.2 104.3 L68.5 104.3Z" fill="#cfd0cf" opacity="1"/><path d="M120.7 61.9 L125.8 57.8 L134.0 61.9Z" fill="#c2ad80" opacity="0.9"/></g></svg><div class="a" style="left:1045.00px;top:202.00px;width:29.00px;height:27.00px;background:#eff0f4;border-radius:4px"></div><svg class="a" style="left:1053.50px;top:207.50px;" width="12.00" height="12.00" viewBox="0 0 24 24" ><g fill="none" stroke="#1f2125" stroke-width="2.2" stroke-linecap="round" stroke-linejoin="round"><circle cx="10" cy="10" r="7"/><path d="M21 21l-6-6M7 10h6M10 7v6"/></g></svg><div class="t " style="left:1300.00px;top:189.64px;font-size:12px;line-height:12px;color:#4b4f58;">EAN13</div><div class="a" style="left:1440.00px;top:188.00px;width:29.00px;height:27.00px;background:#eff0f4;border-radius:4px"></div><svg class="a" style="left:1448.50px;top:193.50px;" width="12.00" height="12.00" viewBox="0 0 24 24" ><g fill="none" stroke="#1f2125" stroke-width="2.2" stroke-linecap="round" stroke-linejoin="round"><path d="M17 17h2a2 2 0 0 0 2-2v-4a2 2 0 0 0-2-2H5a2 2 0 0 0-2 2v4a2 2 0 0 0 2 2h2"/><path d="M17 9V5a2 2 0 0 0-2-2H9a2 2 0 0 0-2 2v4"/><rect x="7" y="13" width="10" height="8" rx="2"/></g></svg><div class="a" style="left:1440.00px;top:220.30px;width:29.00px;height:26.50px;background:#eff0f4;border-radius:4px"></div><svg class="a" style="left:1448.50px;top:225.55px;" width="12.00" height="12.00" viewBox="0 0 24 24" ><g fill="none" stroke="#1f2125" stroke-width="2.2" stroke-linecap="round" stroke-linejoin="round"><circle cx="10" cy="10" r="7"/><path d="M21 21l-6-6M7 10h6M10 7v6"/></g></svg><svg class="a" style="left:0;top:0" width="1918" height="1075"><g fill="#000"><rect x="1236.0" y="214.2" width="2.0" height="131.8"/><rect x="1240.0" y="214.2" width="2.0" height="131.8"/><rect x="1244.0" y="214.2" width="8.0" height="119.6"/><rect x="1254.0" y="214.2" width="2.0" height="119.6"/><rect x="1260.0" y="214.2" width="6.0" height="119.6"/><rect x="1268.0" y="214.2" width="2.0" height="119.6"/><rect x="1272.0" y="214.2" width="6.0" height="119.6"/><rect x="1282.0" y="214.2" width="2.0" height="119.6"/><rect x="1286.0" y="214.2" width="2.0" height="119.6"/><rect x="1290.0" y="214.2" width="8.0" height="119.6"/><rect x="1300.0" y="214.2" width="4.0" height="119.6"/><rect x="1306.0" y="214.2" width="6.0" height="119.6"/><rect x="1318.0" y="214.2" width="2.0" height="119.6"/><rect x="1324.0" y="214.2" width="2.0" height="119.6"/><rect x="1328.0" y="214.2" width="2.0" height="131.8"/><rect x="1332.0" y="214.2" width="2.0" height="131.8"/><rect x="1336.0" y="214.2" width="6.0" height="119.6"/><rect x="1344.0" y="214.2" width="2.0" height="119.6"/><rect x="1350.0" y="214.2" width="2.0" height="119.6"/><rect x="1354.0" y="214.2" width="6.0" height="119.6"/><rect x="1364.0" y="214.2" width="2.0" height="119.6"/><rect x="1374.0" y="214.2" width="2.0" height="119.6"/><rect x="1378.0" y="214.2" width="4.0" height="119.6"/><rect x="1384.0" y="214.2" width="4.0" height="119.6"/><rect x="1392.0" y="214.2" width="2.0" height="119.6"/><rect x="1396.0" y="214.2" width="2.0" height="119.6"/><rect x="1406.0" y="214.2" width="6.0" height="119.6"/><rect x="1414.0" y="214.2" width="2.0" height="119.6"/><rect x="1420.0" y="214.2" width="2.0" height="131.8"/><rect x="1424.0" y="214.2" width="2.0" height="131.8"/></g></svg><div class="t " style="left:1212.30px;top:338.12px;font-size:21px;line-height:21px;color:#000;letter-spacing:-0.05px">5</div><div class="t " style="left:1248.30px;top:338.12px;font-size:21px;line-height:21px;color:#000;letter-spacing:-0.05px">345688</div><div class="t " style="left:1342.80px;top:338.12px;font-size:21px;line-height:21px;color:#000;letter-spacing:-0.05px">943269</div><svg class="a" style="left:0;top:0" width="1918" height="1075" shape-rendering="crispEdges"><g fill="#000"><rect x="1612.00" y="217.10" width="25.47" height="3.66"/><rect x="1641.09" y="217.10" width="3.66" height="3.66"/><rect x="1655.64" y="217.10" width="3.66" height="3.66"/><rect x="1666.55" y="217.10" width="14.57" height="3.66"/><rect x="1695.64" y="217.10" width="3.66" height="3.66"/><rect x="1706.55" y="217.10" width="25.47" height="3.66"/><rect x="1612.00" y="220.74" width="3.66" height="3.66"/><rect x="1633.82" y="220.74" width="3.66" height="3.66"/><rect x="1644.73" y="220.74" width="14.57" height="3.66"/><rect x="1673.82" y="220.74" width="3.66" height="3.66"/><rect x="1681.09" y="220.74" width="3.66" height="3.66"/><rect x="1692.00" y="220.74" width="3.66" height="3.66"/><rect x="1706.55" y="220.74" width="3.66" height="3.66"/><rect x="1728.36" y="220.74" width="3.66" height="3.66"/><rect x="1612.00" y="224.37" width="3.66" height="3.66"/><rect x="1619.27" y="224.37" width="10.93" height="3.66"/><rect x="1633.82" y="224.37" width="3.66" height="3.66"/><rect x="1648.36" y="224.37" width="3.66" height="3.66"/><rect x="1655.64" y="224.37" width="7.29" height="3.66"/><rect x="1666.55" y="224.37" width="7.29" height="3.66"/><rect x="1684.73" y="224.37" width="3.66" height="3.66"/><rect x="1695.64" y="224.37" width="3.66" height="3.66"/><rect x="1706.55" y="224.37" width="3.66" height="3.66"/><rect x="1713.82" y="224.37" width="10.93" height="3.66"/><rect x="1728.36" y="224.37" width="3.66" height="3.66"/><rect x="1612.00" y="228.01" width="3.66" height="3.66"/><rect x="1619.27" y="228.01" width="10.93" height="3.66"/><rect x="1633.82" y="228.01" width="3.66" height="3.66"/><rect x="1641.09" y="228.01" width="7.29" height="3.66"/><rect x="1655.64" y="228.01" width="3.66" height="3.66"/><rect x="1662.91" y="228.01" width="7.29" height="3.66"/><rect x="1673.82" y="228.01" width="21.84" height="3.66"/><rect x="1706.55" y="228.01" width="3.66" height="3.66"/><rect x="1713.82" y="228.01" width="10.93" height="3.66"/><rect x="1728.36" y="228.01" width="3.66" height="3.66"/><rect x="1612.00" y="231.65" width="3.66" height="3.66"/><rect x="1619.27" y="231.65" width="10.93" height="3.66"/><rect x="1633.82" y="231.65" width="3.66" height="3.66"/><rect x="1641.09" y="231.65" width="7.29" height="3.66"/><rect x="1659.27" y="231.65" width="7.29" height="3.66"/><rect x="1673.82" y="231.65" width="18.20" height="3.66"/><rect x="1695.64" y="231.65" width="3.66" height="3.66"/><rect x="1706.55" y="231.65" width="3.66" height="3.66"/><rect x="1713.82" y="231.65" width="10.93" height="3.66"/><rect x="1728.36" y="231.65" width="3.66" height="3.66"/><rect x="1612.00" y="235.28" width="3.66" height="3.66"/><rect x="1633.82" y="235.28" width="3.66" height="3.66"/><rect x="1641.09" y="235.28" width="7.29" height="3.66"/><rect x="1659.27" y="235.28" width="7.29" height="3.66"/><rect x="1670.18" y="235.28" width="3.66" height="3.66"/><rect x="1681.09" y="235.28" width="3.66" height="3.66"/><rect x="1688.36" y="235.28" width="14.57" height="3.66"/><rect x="1706.55" y="235.28" width="3.66" height="3.66"/><rect x="1728.36" y="235.28" width="3.66" height="3.66"/><rect x="1612.00" y="238.92" width="25.47" height="3.66"/><rect x="1641.09" y="238.92" width="3.66" height="3.66"/><rect x="1648.36" y="238.92" width="3.66" height="3.66"/><rect x="1655.64" y="238.92" width="3.66" height="3.66"/><rect x="1662.91" y="238.92" width="3.66" height="3.66"/><rect x="1670.18" y="238.92" width="3.66" height="3.66"/><rect x="1677.45" y="238.92" width="3.66" height="3.66"/><rect x="1684.73" y="238.92" width="3.66" height="3.66"/><rect x="1692.00" y="238.92" width="3.66" height="3.66"/><rect x="1699.27" y="238.92" width="3.66" height="3.66"/><rect x="1706.55" y="238.92" width="25.47" height="3.66"/><rect x="1641.09" y="242.55" width="3.66" height="3.66"/><rect x="1652.00" y="242.55" width="3.66" height="3.66"/><rect x="1666.55" y="242.55" width="14.57" height="3.66"/><rect x="1688.36" y="242.55" width="10.93" height="3.66"/><rect x="1612.00" y="246.19" width="3.66" height="3.66"/><rect x="1626.55" y="246.19" width="3.66" height="3.66"/><rect x="1633.82" y="246.19" width="14.57" height="3.66"/><rect x="1662.91" y="246.19" width="3.66" height="3.66"/><rect x="1670.18" y="246.19" width="7.29" height="3.66"/><rect x="1681.09" y="246.19" width="14.57" height="3.66"/><rect x="1699.27" y="246.19" width="21.84" height="3.66"/><rect x="1728.36" y="246.19" width="3.66" height="3.66"/><rect x="1615.64" y="249.83" width="3.66" height="3.66"/><rect x="1626.55" y="249.83" width="7.29" height="3.66"/><rect x="1637.45" y="249.83" width="3.66" height="3.66"/><rect x="1648.36" y="249.83" width="3.66" height="3.66"/><rect x="1655.64" y="249.83" width="18.20" height="3.66"/><rect x="1677.45" y="249.83" width="3.66" height="3.66"/><rect x="1684.73" y="249.83" width="3.66" height="3.66"/><rect x="1692.00" y="249.83" width="7.29" height="3.66"/><rect x="1702.91" y="249.83" width="3.66" height="3.66"/><rect x="1717.45" y="249.83" width="10.93" height="3.66"/><rect x="1612.00" y="253.46" width="3.66" height="3.66"/><rect x="1619.27" y="253.46" width="3.66" height="3.66"/><rect x="1626.55" y="253.46" width="25.47" height="3.66"/><rect x="1655.64" y="253.46" width="3.66" height="3.66"/><rect x="1666.55" y="253.46" width="3.66" height="3.66"/><rect x="1673.82" y="253.46" width="3.66" height="3.66"/><rect x="1688.36" y="253.46" width="14.57" height="3.66"/><rect x="1717.45" y="253.46" width="3.66" height="3.66"/><rect x="1724.73" y="253.46" width="3.66" height="3.66"/><rect x="1619.27" y="257.10" width="14.57" height="3.66"/><rect x="1641.09" y="257.10" width="3.66" height="3.66"/><rect x="1648.36" y="257.10" width="10.93" height="3.66"/><rect x="1662.91" y="257.10" width="18.20" height="3.66"/><rect x="1688.36" y="257.10" width="10.93" height="3.66"/><rect x="1612.00" y="260.74" width="3.66" height="3.66"/><rect x="1619.27" y="260.74" width="7.29" height="3.66"/><rect x="1630.18" y="260.74" width="36.38" height="3.66"/><rect x="1677.45" y="260.74" width="3.66" height="3.66"/><rect x="1684.73" y="260.74" width="3.66" height="3.66"/><rect x="1699.27" y="260.74" width="3.66" height="3.66"/><rect x="1706.55" y="260.74" width="3.66" height="3.66"/><rect x="1713.82" y="260.74" width="7.29" height="3.66"/><rect x="1724.73" y="260.74" width="7.29" height="3.66"/><rect x="1615.64" y="264.37" width="3.66" height="3.66"/><rect x="1622.91" y="264.37" width="7.29" height="3.66"/><rect x="1637.45" y="264.37" width="14.57" height="3.66"/><rect x="1670.18" y="264.37" width="3.66" height="3.66"/><rect x="1681.09" y="264.37" width="3.66" height="3.66"/><rect x="1695.64" y="264.37" width="3.66" height="3.66"/><rect x="1702.91" y="264.37" width="7.29" height="3.66"/><rect x="1612.00" y="268.01" width="7.29" height="3.66"/><rect x="1622.91" y="268.01" width="3.66" height="3.66"/><rect x="1630.18" y="268.01" width="7.29" height="3.66"/><rect x="1641.09" y="268.01" width="3.66" height="3.66"/><rect x="1648.36" y="268.01" width="3.66" height="3.66"/><rect x="1670.18" y="268.01" width="7.29" height="3.66"/><rect x="1681.09" y="268.01" width="3.66" height="3.66"/><rect x="1688.36" y="268.01" width="3.66" height="3.66"/><rect x="1695.64" y="268.01" width="14.57" height="3.66"/><rect x="1713.82" y="268.01" width="3.66" height="3.66"/><rect x="1724.73" y="268.01" width="3.66" height="3.66"/><rect x="1612.00" y="271.65" width="3.66" height="3.66"/><rect x="1619.27" y="271.65" width="14.57" height="3.66"/><rect x="1641.09" y="271.65" width="7.29" height="3.66"/><rect x="1655.64" y="271.65" width="7.29" height="3.66"/><rect x="1673.82" y="271.65" width="40.02" height="3.66"/><rect x="1717.45" y="271.65" width="3.66" height="3.66"/><rect x="1615.64" y="275.28" width="7.29" height="3.66"/><rect x="1630.18" y="275.28" width="7.29" height="3.66"/><rect x="1644.73" y="275.28" width="3.66" height="3.66"/><rect x="1652.00" y="275.28" width="3.66" height="3.66"/><rect x="1659.27" y="275.28" width="3.66" height="3.66"/><rect x="1666.55" y="275.28" width="3.66" height="3.66"/><rect x="1673.82" y="275.28" width="3.66" height="3.66"/><rect x="1688.36" y="275.28" width="7.29" height="3.66"/><rect x="1699.27" y="275.28" width="3.66" height="3.66"/><rect x="1706.55" y="275.28" width="3.66" height="3.66"/><rect x="1713.82" y="275.28" width="3.66" height="3.66"/><rect x="1724.73" y="275.28" width="3.66" height="3.66"/><rect x="1615.64" y="278.92" width="7.29" height="3.66"/><rect x="1626.55" y="278.92" width="3.66" height="3.66"/><rect x="1644.73" y="278.92" width="7.29" height="3.66"/><rect x="1655.64" y="278.92" width="7.29" height="3.66"/><rect x="1666.55" y="278.92" width="14.57" height="3.66"/><rect x="1688.36" y="278.92" width="3.66" height="3.66"/><rect x="1695.64" y="278.92" width="3.66" height="3.66"/><rect x="1702.91" y="278.92" width="3.66" height="3.66"/><rect x="1717.45" y="278.92" width="7.29" height="3.66"/><rect x="1612.00" y="282.55" width="3.66" height="3.66"/><rect x="1619.27" y="282.55" width="3.66" height="3.66"/><rect x="1626.55" y="282.55" width="10.93" height="3.66"/><rect x="1641.09" y="282.55" width="7.29" height="3.66"/><rect x="1659.27" y="282.55" width="14.57" height="3.66"/><rect x="1677.45" y="282.55" width="3.66" height="3.66"/><rect x="1684.73" y="282.55" width="3.66" height="3.66"/><rect x="1695.64" y="282.55" width="10.93" height="3.66"/><rect x="1710.18" y="282.55" width="3.66" height="3.66"/><rect x="1717.45" y="282.55" width="3.66" height="3.66"/><rect x="1724.73" y="282.55" width="3.66" height="3.66"/><rect x="1615.64" y="286.19" width="10.93" height="3.66"/><rect x="1630.18" y="286.19" width="3.66" height="3.66"/><rect x="1641.09" y="286.19" width="7.29" height="3.66"/><rect x="1655.64" y="286.19" width="3.66" height="3.66"/><rect x="1662.91" y="286.19" width="3.66" height="3.66"/><rect x="1684.73" y="286.19" width="3.66" height="3.66"/><rect x="1692.00" y="286.19" width="21.84" height="3.66"/><rect x="1724.73" y="286.19" width="3.66" height="3.66"/><rect x="1612.00" y="289.83" width="7.29" height="3.66"/><rect x="1626.55" y="289.83" width="10.93" height="3.66"/><rect x="1659.27" y="289.83" width="14.57" height="3.66"/><rect x="1692.00" y="289.83" width="14.57" height="3.66"/><rect x="1713.82" y="289.83" width="7.29" height="3.66"/><rect x="1724.73" y="289.83" width="7.29" height="3.66"/><rect x="1612.00" y="293.46" width="3.66" height="3.66"/><rect x="1626.55" y="293.46" width="7.29" height="3.66"/><rect x="1641.09" y="293.46" width="10.93" height="3.66"/><rect x="1662.91" y="293.46" width="3.66" height="3.66"/><rect x="1673.82" y="293.46" width="14.57" height="3.66"/><rect x="1699.27" y="293.46" width="7.29" height="3.66"/><rect x="1710.18" y="293.46" width="3.66" height="3.66"/><rect x="1717.45" y="293.46" width="3.66" height="3.66"/><rect x="1724.73" y="293.46" width="3.66" height="3.66"/><rect x="1619.27" y="297.10" width="3.66" height="3.66"/><rect x="1633.82" y="297.10" width="3.66" height="3.66"/><rect x="1641.09" y="297.10" width="10.93" height="3.66"/><rect x="1655.64" y="297.10" width="14.57" height="3.66"/><rect x="1673.82" y="297.10" width="3.66" height="3.66"/><rect x="1684.73" y="297.10" width="7.29" height="3.66"/><rect x="1695.64" y="297.10" width="3.66" height="3.66"/><rect x="1702.91" y="297.10" width="14.57" height="3.66"/><rect x="1721.09" y="297.10" width="7.29" height="3.66"/><rect x="1619.27" y="300.74" width="3.66" height="3.66"/><rect x="1626.55" y="300.74" width="3.66" height="3.66"/><rect x="1644.73" y="300.74" width="10.93" height="3.66"/><rect x="1659.27" y="300.74" width="3.66" height="3.66"/><rect x="1666.55" y="300.74" width="14.57" height="3.66"/><rect x="1688.36" y="300.74" width="10.93" height="3.66"/><rect x="1702.91" y="300.74" width="3.66" height="3.66"/><rect x="1710.18" y="300.74" width="7.29" height="3.66"/><rect x="1728.36" y="300.74" width="3.66" height="3.66"/><rect x="1612.00" y="304.37" width="14.57" height="3.66"/><rect x="1633.82" y="304.37" width="3.66" height="3.66"/><rect x="1648.36" y="304.37" width="3.66" height="3.66"/><rect x="1659.27" y="304.37" width="3.66" height="3.66"/><rect x="1673.82" y="304.37" width="3.66" height="3.66"/><rect x="1681.09" y="304.37" width="36.38" height="3.66"/><rect x="1728.36" y="304.37" width="3.66" height="3.66"/><rect x="1641.09" y="308.01" width="14.57" height="3.66"/><rect x="1662.91" y="308.01" width="7.29" height="3.66"/><rect x="1677.45" y="308.01" width="3.66" height="3.66"/><rect x="1699.27" y="308.01" width="3.66" height="3.66"/><rect x="1713.82" y="308.01" width="3.66" height="3.66"/><rect x="1721.09" y="308.01" width="7.29" height="3.66"/><rect x="1612.00" y="311.65" width="25.47" height="3.66"/><rect x="1641.09" y="311.65" width="10.93" height="3.66"/><rect x="1662.91" y="311.65" width="14.57" height="3.66"/><rect x="1688.36" y="311.65" width="7.29" height="3.66"/><rect x="1699.27" y="311.65" width="3.66" height="3.66"/><rect x="1706.55" y="311.65" width="3.66" height="3.66"/><rect x="1713.82" y="311.65" width="7.29" height="3.66"/><rect x="1724.73" y="311.65" width="3.66" height="3.66"/><rect x="1612.00" y="315.28" width="3.66" height="3.66"/><rect x="1633.82" y="315.28" width="3.66" height="3.66"/><rect x="1644.73" y="315.28" width="7.29" height="3.66"/><rect x="1659.27" y="315.28" width="3.66" height="3.66"/><rect x="1666.55" y="315.28" width="3.66" height="3.66"/><rect x="1673.82" y="315.28" width="18.20" height="3.66"/><rect x="1699.27" y="315.28" width="3.66" height="3.66"/><rect x="1713.82" y="315.28" width="3.66" height="3.66"/><rect x="1724.73" y="315.28" width="7.29" height="3.66"/><rect x="1612.00" y="318.92" width="3.66" height="3.66"/><rect x="1619.27" y="318.92" width="10.93" height="3.66"/><rect x="1633.82" y="318.92" width="3.66" height="3.66"/><rect x="1641.09" y="318.92" width="18.20" height="3.66"/><rect x="1662.91" y="318.92" width="3.66" height="3.66"/><rect x="1677.45" y="318.92" width="3.66" height="3.66"/><rect x="1684.73" y="318.92" width="3.66" height="3.66"/><rect x="1699.27" y="318.92" width="21.84" height="3.66"/><rect x="1612.00" y="322.55" width="3.66" height="3.66"/><rect x="1619.27" y="322.55" width="10.93" height="3.66"/><rect x="1633.82" y="322.55" width="3.66" height="3.66"/><rect x="1648.36" y="322.55" width="3.66" height="3.66"/><rect x="1659.27" y="322.55" width="3.66" height="3.66"/><rect x="1670.18" y="322.55" width="7.29" height="3.66"/><rect x="1681.09" y="322.55" width="3.66" height="3.66"/><rect x="1692.00" y="322.55" width="3.66" height="3.66"/><rect x="1699.27" y="322.55" width="3.66" height="3.66"/><rect x="1706.55" y="322.55" width="10.93" height="3.66"/><rect x="1721.09" y="322.55" width="7.29" height="3.66"/><rect x="1612.00" y="326.19" width="3.66" height="3.66"/><rect x="1619.27" y="326.19" width="10.93" height="3.66"/><rect x="1633.82" y="326.19" width="3.66" height="3.66"/><rect x="1648.36" y="326.19" width="3.66" height="3.66"/><rect x="1655.64" y="326.19" width="10.93" height="3.66"/><rect x="1670.18" y="326.19" width="3.66" height="3.66"/><rect x="1677.45" y="326.19" width="7.29" height="3.66"/><rect x="1688.36" y="326.19" width="3.66" height="3.66"/><rect x="1695.64" y="326.19" width="21.84" height="3.66"/><rect x="1612.00" y="329.83" width="3.66" height="3.66"/><rect x="1633.82" y="329.83" width="3.66" height="3.66"/><rect x="1644.73" y="329.83" width="7.29" height="3.66"/><rect x="1659.27" y="329.83" width="3.66" height="3.66"/><rect x="1673.82" y="329.83" width="3.66" height="3.66"/><rect x="1681.09" y="329.83" width="10.93" height="3.66"/><rect x="1695.64" y="329.83" width="3.66" height="3.66"/><rect x="1706.55" y="329.83" width="3.66" height="3.66"/><rect x="1612.00" y="333.46" width="25.47" height="3.66"/><rect x="1641.09" y="333.46" width="7.29" height="3.66"/><rect x="1655.64" y="333.46" width="3.66" height="3.66"/><rect x="1666.55" y="333.46" width="10.93" height="3.66"/><rect x="1684.73" y="333.46" width="7.29" height="3.66"/><rect x="1702.91" y="333.46" width="3.66" height="3.66"/><rect x="1717.45" y="333.46" width="3.66" height="3.66"/><rect x="1728.36" y="333.46" width="3.66" height="3.66"/></g></svg><div class="a" style="left:1751.00px;top:202.20px;width:29.00px;height:26.50px;background:#eff0f4;border-radius:4px"></div><svg class="a" style="left:1759.50px;top:207.45px;" width="12.00" height="12.00" viewBox="0 0 24 24" ><g fill="none" stroke="#1f2125" stroke-width="2.2" stroke-linecap="round" stroke-linejoin="round"><path d="M17 17h2a2 2 0 0 0 2-2v-4a2 2 0 0 0-2-2H5a2 2 0 0 0-2 2v4a2 2 0 0 0 2 2h2"/><path d="M17 9V5a2 2 0 0 0-2-2H9a2 2 0 0 0-2 2v4"/><rect x="7" y="13" width="10" height="8" rx="2"/></g></svg><div class="a" style="left:1751.00px;top:234.20px;width:29.00px;height:26.50px;background:#eff0f4;border-radius:4px"></div><svg class="a" style="left:1759.50px;top:239.45px;" width="12.00" height="12.00" viewBox="0 0 24 24" ><g fill="none" stroke="#1f2125" stroke-width="2.2" stroke-linecap="round" stroke-linejoin="round"><circle cx="10" cy="10" r="7"/><path d="M21 21l-6-6M7 10h6M10 7v6"/></g></svg><div class="t " style="left:787.50px;top:380.04px;font-size:12px;line-height:12px;color:#474a52;">Sredstvo</div><div class="t " style="left:787.50px;top:395.74px;font-size:12px;line-height:12px;color:#4a6cb3;">A-24-000001 - CNC WERKZEUGMASCHINE</div><div class="t " style="left:787.50px;top:416.04px;font-size:12px;line-height:12px;color:#474a52;">Predložak sredstva</div><div class="t " style="left:787.50px;top:431.74px;font-size:12px;line-height:12px;color:#3a3d43;">Fräsmaschine</div><div class="t " style="left:787.50px;top:452.04px;font-size:12px;line-height:12px;color:#474a52;">Klasifikacija</div><div class="t " style="left:787.50px;top:467.74px;font-size:12px;line-height:12px;color:#3a3d43;">CNC 5 Achser</div><div class="t " style="left:787.50px;top:488.04px;font-size:12px;line-height:12px;color:#474a52;">Interna brojka</div><div class="t " style="left:787.50px;top:503.74px;font-size:12px;line-height:12px;color:#3a3d43;">CNC1232134</div><div class="t " style="left:787.50px;top:524.04px;font-size:12px;line-height:12px;color:#474a52;">Proizvođač</div><div class="t " style="left:787.50px;top:539.74px;font-size:12px;line-height:12px;color:#4a6cb3;">BP-25-000013 - Daimler Benz</div><div class="t " style="left:787.50px;top:560.04px;font-size:12px;line-height:12px;color:#474a52;">Dobavljač</div><div class="t " style="left:787.50px;top:575.74px;font-size:12px;line-height:12px;color:#3a3d43;">-</div><div class="t " style="left:787.50px;top:596.04px;font-size:12px;line-height:12px;color:#474a52;">Serviser</div><div class="t " style="left:787.50px;top:611.74px;font-size:12px;line-height:12px;color:#3a3d43;">BP-24-000005 - Schramberger</div><div class="t " style="left:787.50px;top:628.04px;font-size:12px;line-height:12px;color:#3a3d43;">Maschinenhandel</div><div class="t " style="left:1067.50px;top:380.04px;font-size:12px;line-height:12px;color:#474a52;">Lokacija</div><div class="t " style="left:1067.50px;top:395.74px;font-size:12px;line-height:12px;color:#3a3d43;">Hauptgebäude</div><div class="t " style="left:1067.50px;top:416.04px;font-size:12px;line-height:12px;color:#474a52;">Proizvodna linija</div><div class="t " style="left:1067.50px;top:431.74px;font-size:12px;line-height:12px;color:#4a6cb3;">3530 - Halle 1</div><div class="t " style="left:1067.50px;top:452.04px;font-size:12px;line-height:12px;color:#474a52;">Serijski broj</div><div class="t " style="left:1067.50px;top:467.74px;font-size:12px;line-height:12px;color:#3a3d43;">250120211512</div><div class="t " style="left:1067.50px;top:488.04px;font-size:12px;line-height:12px;color:#474a52;">Status</div><div class="t " style="left:1067.50px;top:503.74px;font-size:12px;line-height:12px;color:#3a3d43;">Aussortiert</div><div class="t " style="left:1067.50px;top:524.04px;font-size:12px;line-height:12px;color:#474a52;">EAN kod</div><div class="t " style="left:1067.50px;top:539.74px;font-size:12px;line-height:12px;color:#3a3d43;">534568894326</div><div class="t " style="left:1067.50px;top:560.04px;font-size:12px;line-height:12px;color:#474a52;">Broj inventara</div><div class="t " style="left:1067.50px;top:575.74px;font-size:12px;line-height:12px;color:#3a3d43;">2501202411511</div><div class="t " style="left:1067.50px;top:596.04px;font-size:12px;line-height:12px;color:#474a52;">Troškovna jedinica</div><div class="t " style="left:1067.50px;top:611.74px;font-size:12px;line-height:12px;color:#3a3d43;">Fertigung</div><div class="t " style="left:1347.50px;top:380.04px;font-size:12px;line-height:12px;color:#474a52;">Trošak zastoja (po satu)</div><div class="t " style="left:1347.50px;top:395.74px;font-size:12px;line-height:12px;color:#3a3d43;">160</div><div class="t " style="left:1347.50px;top:416.04px;font-size:12px;line-height:12px;color:#474a52;">Prioritet</div><div class="t " style="left:1347.50px;top:431.74px;font-size:12px;line-height:12px;color:#3a3d43;">Visok</div><div class="t " style="left:1347.50px;top:452.04px;font-size:12px;line-height:12px;color:#474a52;">Oprema</div><div class="t " style="left:1347.50px;top:467.74px;font-size:12px;line-height:12px;color:#3a3d43;">Ne</div><div class="t " style="left:1347.50px;top:488.04px;font-size:12px;line-height:12px;color:#474a52;">Radionica</div><div class="t " style="left:1347.50px;top:503.74px;font-size:12px;line-height:12px;color:#3a3d43;">Ne</div><div class="t " style="left:1347.50px;top:524.04px;font-size:12px;line-height:12px;color:#474a52;">Web URL</div><div class="t " style="left:1347.50px;top:539.74px;font-size:12px;line-height:12px;color:#4a6cb3;">Otvori web stranicu</div><svg class="a" style="left:1453.50px;top:538.00px;" width="11.00" height="11.00" viewBox="0 0 24 24" ><g fill="none" stroke="#4a6cb3" stroke-width="2.2" stroke-linecap="round" stroke-linejoin="round"><path d="M12 6H6a2 2 0 0 0-2 2v10a2 2 0 0 0 2 2h10a2 2 0 0 0 2-2v-6M11 13l9-9M15 4h5v5"/></g></svg><div class="t " style="left:1534.50px;top:380.04px;font-size:12px;line-height:12px;color:#474a52;">Komponente</div><div class="a" style="left:1554.30px;top:400.90px;width:10.00px;height:10.00px;background:#e0a93a;border-radius:50%"></div><div class="t " style="left:1568.50px;top:401.24px;font-size:12px;line-height:12px;color:#3a3d43;">C-24-000001 - Wendelschaftfräser</div><div class="a" style="left:1554.30px;top:426.90px;width:10.00px;height:10.00px;background:#3f7a25;border-radius:50%"></div><div class="t " style="left:1568.50px;top:427.24px;font-size:12px;line-height:12px;color:#3a3d43;">C-24-000013 - Motoreinheit</div><div class="t " style="left:787.50px;top:774.54px;font-size:12px;line-height:12px;color:#474a52;">Opis</div><div class="t " style="left:787.50px;top:790.24px;font-size:12px;line-height:12px;color:#3a3d43;">-</div><div class="a" style="left:252.00px;top:1015.00px;width:1666.00px;height:60.00px;background:#fff;border-top:1px solid #d6d6da"></div><div class="a" style="left:1755.00px;top:1031.00px;width:78.00px;height:37.00px;background:#f0f1f4;border-radius:5px"></div><div class="t " style="left:1767.80px;top:1043.50px;font-size:13px;line-height:13px;color:#111;">Odustani</div><div class="a" style="left:1837.00px;top:1031.00px;width:67.00px;height:37.00px;background:#6b6bdb;border-radius:5px"></div><div class="t " style="left:1849.70px;top:1043.50px;font-size:13px;line-height:13px;color:#fff;">Spremi</div><div class="a" style="left:0.00px;top:0.00px;width:252.00px;height:1075.00px;background:#353243"></div><div class="a" style="left:0.00px;top:0.00px;width:2.00px;height:1075.00px;background:#3a3a37"></div><svg class="a" style="left:0.00px;top:0.00px;" width="252.00" height="60.00" viewBox="0 0 252 60" >
<path d="M64.07 11 L77.98 22.13 L91.9 11 L91.9 40.5 L87.18 37.1 L87.18 21.06 L77.98 28.55 L64.07 17.2 Z" fill="#f2f2f2"/>
<path d="M64.07 21.7 L77.98 33.26 L87.18 25.98 L87.18 31.54 L80.98 36.25 L91.89 44.39 L91.89 50.81 L77.98 39.25 L64.07 50.81 L64.07 44.39 L74.55 36.25 L64.07 27.69 Z" fill="none" stroke="#dcdce0" stroke-width="0.95" stroke-linejoin="miter"/>
<g fill="none" stroke="#f2f2f2" stroke-width="4.4">
<path d="M98.1 43.7 V19.5"/>
<path d="M98.1 28 C98.1 22.8 101 21.7 105 21.7 C109 21.7 111.9 23 111.9 28 V43.7"/>
<path d="M111.9 28 C111.9 23 114.5 21.7 118.7 21.7 C123 21.7 125.6 23 125.6 28 V43.7"/>
<path d="M132.1 24.3 C133.5 22.5 135.5 21.7 139 21.7 C143.5 21.7 146.4 24 146.4 28.5 V43.7"/>
<ellipse cx="138.4" cy="36.6" rx="5.9" ry="5.0"/>
<path d="M154.8 43.7 V19.5"/>
<path d="M163 43.7 V19.5"/>
<path d="M163 28 C163 23 166 21.7 169.7 21.7 C174 21.7 176.5 23.5 176.5 28.5 V43.7"/>
<path d="M185 13 V37.5 C185 40.8 186.5 41.5 190 41.5"/>
<path d="M180.1 21.6 H190"/>
</g>
<rect x="152.6" y="11.4" width="4.4" height="4.4" fill="#f2f2f2"/>
</svg><svg class="a" style="left:25.50px;top:85.00px;" width="16.00" height="16.00" viewBox="0 0 24 24" ><g fill="none" stroke="#fff" stroke-width="2" stroke-linecap="round" stroke-linejoin="round"><path d="M5 12H3l9-9 9 9h-2"/><path d="M5 12v7a2 2 0 0 0 2 2h10a2 2 0 0 0 2-2v-7"/><circle cx="12" cy="13" r="2"/></g></svg><div class="t " style="left:54.60px;top:86.90px;font-size:13px;line-height:13px;color:#fff;letter-spacing:-0.04px;-webkit-text-stroke:0.25px #fff">Nadzorna ploča</div><div class="a" style="left:2.00px;top:114.00px;width:250.00px;height:39.00px;background:#3e3b4b"></div><div class="a" style="left:2.00px;top:114.00px;width:3.00px;height:39.00px;background:#fff"></div><svg class="a" style="left:25.50px;top:123.80px;" width="16.00" height="16.00" viewBox="0 0 24 24" ><g fill="none" stroke="#fff" stroke-width="2" stroke-linecap="round" stroke-linejoin="round"><rect x="4" y="5" width="16" height="16" rx="2"/><path d="M16 3v4M8 3v4M4 10h16M8 14h5"/></g></svg><div class="t " style="left:54.60px;top:125.70px;font-size:13px;line-height:13px;color:#fff;letter-spacing:-0.04px;-webkit-text-stroke:0.25px #fff">Radni nalozi</div><svg class="a" style="left:25.50px;top:162.60px;" width="16.00" height="16.00" viewBox="0 0 24 24" ><g fill="none" stroke="#fff" stroke-width="2" stroke-linecap="round" stroke-linejoin="round"><rect x="4" y="5" width="16" height="16" rx="2"/><path d="M16 3v4M8 3v4M4 9h16"/></g></svg><div class="t " style="left:54.60px;top:164.50px;font-size:13px;line-height:13px;color:#fff;letter-spacing:-0.04px;-webkit-text-stroke:0.25px #fff">Planiranje održavanja</div><svg class="a" style="left:25.50px;top:201.40px;" width="16.00" height="16.00" viewBox="0 0 24 24" ><g fill="none" stroke="#fff" stroke-width="2" stroke-linecap="round" stroke-linejoin="round"><rect x="4" y="5" width="16" height="16" rx="2"/><path d="M16 3v4M8 3v4M4 9h16"/><rect x="13" y="13" width="4" height="4" fill="#fff" stroke="none"/></g></svg><div class="t " style="left:54.60px;top:203.30px;font-size:13px;line-height:13px;color:#fff;letter-spacing:-0.04px;-webkit-text-stroke:0.25px #fff">Kalendar radnih naloga</div><svg class="a" style="left:25.50px;top:240.20px;" width="16.00" height="16.00" viewBox="0 0 24 24" ><g fill="none" stroke="#fff" stroke-width="2" stroke-linecap="round" stroke-linejoin="round"><circle cx="12" cy="5" r="2"/><path d="M12 7v5M5 17v-3a2 2 0 0 1 2-2h10a2 2 0 0 1 2 2v3M12 12v5"/><circle cx="5" cy="19" r="1.6" fill="#fff"/><circle cx="12" cy="19" r="1.6" fill="#fff"/><circle cx="19" cy="19" r="1.6" fill="#fff"/></g></svg><div class="t " style="left:54.60px;top:242.10px;font-size:13px;line-height:13px;color:#fff;letter-spacing:-0.04px;-webkit-text-stroke:0.25px #fff">Pregled strukture</div><svg class="a" style="left:25.50px;top:279.00px;" width="16.00" height="16.00" viewBox="0 0 24 24" ><g fill="none" stroke="#fff" stroke-width="2" stroke-linecap="round" stroke-linejoin="round"><path d="M2 5v16" stroke-width="3.2" stroke-linecap="butt"/><path d="M9 9V5.5a2 2 0 0 1 2-2h8a2 2 0 0 1 2 2V9" stroke-width="2.4"/><rect x="7" y="8.5" width="16.5" height="12.5" rx="1.2" fill="#fff" stroke="none"/><rect x="10.6" y="11" width="3.6" height="3.4" fill="#353243" stroke="none"/><rect x="15.8" y="11" width="3.6" height="3.4" fill="#353243" stroke="none"/><rect x="10.6" y="15.5" width="3.6" height="3.2" fill="#353243" stroke="none"/><rect x="15.8" y="15.5" width="3.6" height="3.2" fill="#353243" stroke="none"/></g></svg><div class="t " style="left:54.60px;top:280.90px;font-size:13px;line-height:13px;color:#fff;letter-spacing:-0.04px;-webkit-text-stroke:0.25px #fff">Sredstva</div><svg class="a" style="left:25.50px;top:317.82px;" width="16.00" height="16.00" viewBox="0 0 24 24" ><g fill="none" stroke="#fff" stroke-width="2" stroke-linecap="round" stroke-linejoin="round"><path d="M2.4 2.6L8.6 8" stroke-width="5"/><path d="M8.6 8L13 12.2" stroke-width="2.2"/><path d="M14.6 14.2L20.6 20" stroke-width="6"/><path d="M4.2 19.6L10.6 12.4" stroke-width="6"/><circle cx="4.6" cy="19.2" r="0.9" fill="#353243" stroke="none"/><circle cx="16.6" cy="6.9" r="5.6" fill="#fff" stroke="none"/><circle cx="19.6" cy="3.3" r="3.6" fill="#353243" stroke="none"/><path d="M9.5 9.2l2.6 2.6" stroke="#353243" stroke-width="1"/></g></svg><div class="t " style="left:54.60px;top:319.72px;font-size:13px;line-height:13px;color:#fff;letter-spacing:-0.04px;-webkit-text-stroke:0.25px #fff">Komponente</div><svg class="a" style="left:25.50px;top:356.64px;" width="16.00" height="16.00" viewBox="0 0 24 24" ><g fill="none" stroke="#fff" stroke-width="2" stroke-linecap="round" stroke-linejoin="round"><circle cx="7" cy="7" r="3" stroke-width="3"/><path d="M7 2v1.5M7 10.5V12M2 7h1.5M10.5 7H12M3.5 3.5l1 1M9.5 9.5l1 1M3.5 10.5l1-1M9.5 4.5l1-1" stroke-width="2.2"/><circle cx="16.5" cy="16.5" r="3.2" stroke-width="3"/><path d="M16.5 11v1.5M16.5 20.5V22M11 16.5h1.5M20.5 16.5H22M12.8 12.8l1 1M19.2 19.2l1 1M12.8 20.2l1-1M19.2 13.8l1-1" stroke-width="2.2"/></g></svg><div class="t " style="left:54.60px;top:358.54px;font-size:13px;line-height:13px;color:#fff;letter-spacing:-0.04px;-webkit-text-stroke:0.25px #fff">Dijelovi</div><svg class="a" style="left:25.50px;top:395.46px;" width="16.00" height="16.00" viewBox="0 0 24 24" ><g fill="none" stroke="#fff" stroke-width="2" stroke-linecap="round" stroke-linejoin="round"><path d="M12 3l8 4.5v9L12 21l-8-4.5v-9z" fill="#fff"/><path d="M12 12l8-4.5M12 12v9M12 12L4 7.5M8 5.2l8 4.6" stroke="#353243" stroke-width="1.6"/></g></svg><div class="t " style="left:54.60px;top:397.36px;font-size:13px;line-height:13px;color:#fff;letter-spacing:-0.04px;-webkit-text-stroke:0.25px #fff">Zalihe</div><svg class="a" style="left:212.00px;top:395.46px;" width="16.00" height="16.00" viewBox="0 0 24 24" ><g fill="none" stroke="#fff" stroke-width="2.2" stroke-linecap="round" stroke-linejoin="round"><path d="M6 9l6 6 6-6"/></g></svg><svg class="a" style="left:25.50px;top:434.28px;" width="16.00" height="16.00" viewBox="0 0 24 24" ><g fill="none" stroke="#fff" stroke-width="2" stroke-linecap="round" stroke-linejoin="round"><circle cx="16.5" cy="7.5" r="4" stroke-width="2.6"/><path d="M13.5 10.5L4 20" stroke-width="2.8"/></g></svg><div class="t " style="left:54.60px;top:436.18px;font-size:13px;line-height:13px;color:#fff;letter-spacing:-0.04px;-webkit-text-stroke:0.25px #fff">Upravljanje ključevima</div><svg class="a" style="left:25.50px;top:473.10px;" width="16.00" height="16.00" viewBox="0 0 24 24" ><g fill="none" stroke="#fff" stroke-width="2" stroke-linecap="round" stroke-linejoin="round"><path d="M17 17h3V5a2 2 0 0 0-2-2H8a2 2 0 0 0-2 2v6"/><path d="M4 13h11v6a2 2 0 0 1-2 2H6a2 2 0 0 1-2-2z"/><path d="M10 7h6M10 10h6"/><path d="M15 17h5v2a2 2 0 0 1-2 2h-3"/></g></svg><div class="t " style="left:54.60px;top:475.00px;font-size:13px;line-height:13px;color:#fff;letter-spacing:-0.04px;-webkit-text-stroke:0.25px #fff">Narudžbe</div><svg class="a" style="left:25.50px;top:511.72px;" width="16.00" height="16.00" viewBox="0 0 24 24" ><g fill="none" stroke="#fff" stroke-width="2" stroke-linecap="round" stroke-linejoin="round"><path d="M9 5H7a2 2 0 0 0-2 2v12a2 2 0 0 0 2 2h10a2 2 0 0 0 2-2V7a2 2 0 0 0-2-2h-2"/><rect x="9" y="3" width="6" height="4" rx="1"/><path d="M9 14l2 2 4-4"/></g></svg><div class="t " style="left:54.60px;top:513.62px;font-size:13px;line-height:13px;color:#fff;letter-spacing:-0.04px;-webkit-text-stroke:0.25px #fff">Radni koraci</div><svg class="a" style="left:25.50px;top:550.34px;" width="16.00" height="16.00" viewBox="0 0 24 24" ><g fill="none" stroke="#fff" stroke-width="2" stroke-linecap="round" stroke-linejoin="round"><path d="M3 21V5h9v16" fill="#fff"/><path d="M12 9h8v12h-8" fill="#fff"/><path d="M6 8h1M6 11h1M6 14h1M9 8h1M9 11h1M9 14h1M15 13h2M15 16h2" stroke="#353243" stroke-width="1.5"/></g></svg><div class="t " style="left:54.60px;top:552.24px;font-size:13px;line-height:13px;color:#fff;letter-spacing:-0.04px;-webkit-text-stroke:0.25px #fff">Poslovni partneri</div><svg class="a" style="left:25.50px;top:588.96px;" width="16.00" height="16.00" viewBox="0 0 24 24" ><g fill="none" stroke="#fff" stroke-width="2" stroke-linecap="round" stroke-linejoin="round"><path d="M5 4h14v13H7a2 2 0 0 0-2 2z"/><path d="M5 19a2 2 0 0 0 2 2h12v-4"/><path d="M11 4v7l2.5-1.5L16 11V4" fill="#fff"/></g></svg><div class="t " style="left:54.60px;top:590.86px;font-size:13px;line-height:13px;color:#fff;letter-spacing:-0.04px;-webkit-text-stroke:0.25px #fff">FAQ</div><svg class="a" style="left:25.50px;top:627.58px;" width="16.00" height="16.00" viewBox="0 0 24 24" ><g fill="none" stroke="#fff" stroke-width="2" stroke-linecap="round" stroke-linejoin="round"><path d="M14 3v4a1 1 0 0 0 1 1h4" /><path d="M17 21H7a2 2 0 0 1-2-2V5a2 2 0 0 1 2-2h7l5 5v11a2 2 0 0 1-2 2z" fill="#fff"/><path d="M9 13h6M9 17h6" stroke="#353243" stroke-width="1.8"/></g></svg><div class="t " style="left:54.60px;top:629.48px;font-size:13px;line-height:13px;color:#fff;letter-spacing:-0.04px;-webkit-text-stroke:0.25px #fff">Izvješća</div><svg class="a" style="left:25.50px;top:666.20px;" width="16.00" height="16.00" viewBox="0 0 24 24" ><g fill="none" stroke="#fff" stroke-width="2" stroke-linecap="round" stroke-linejoin="round"><path d="M4 19h16M4 15l4-6 4 2 4-5 4 4" /><path d="M4 4v15"/></g></svg><div class="t " style="left:54.60px;top:668.10px;font-size:13px;line-height:13px;color:#fff;letter-spacing:-0.04px;-webkit-text-stroke:0.25px #fff">Kontroling</div><svg class="a" style="left:25.50px;top:705.10px;" width="16.00" height="16.00" viewBox="0 0 24 24" ><g fill="none" stroke="#fff" stroke-width="2" stroke-linecap="round" stroke-linejoin="round"><path d="M6 4h11a2 2 0 0 1 2 2v12a2 2 0 0 1-2 2H6a1 1 0 0 1-1-1V5a1 1 0 0 1 1-1z"/><path d="M9 4v16M12 8h4M12 12h4"/></g></svg><div class="t " style="left:54.60px;top:707.00px;font-size:13px;line-height:13px;color:#fff;letter-spacing:-0.04px;-webkit-text-stroke:0.25px #fff">Podaci aplikacije</div><svg class="a" style="left:25.50px;top:744.00px;" width="16.00" height="16.00" viewBox="0 0 24 24" ><g fill="none" stroke="#fff" stroke-width="2" stroke-linecap="round" stroke-linejoin="round"><path d="M10.3 4.3c.4-1.8 3-1.8 3.4 0a1.7 1.7 0 0 0 2.6 1.1c1.5-.9 3.3.8 2.4 2.4a1.7 1.7 0 0 0 1 2.6c1.8.4 1.8 3 0 3.4a1.7 1.7 0 0 0-1 2.6c.9 1.5-.8 3.3-2.4 2.4a1.7 1.7 0 0 0-2.6 1c-.4 1.8-3 1.8-3.4 0a1.7 1.7 0 0 0-2.6-1c-1.5.9-3.3-.8-2.4-2.4a1.7 1.7 0 0 0-1-2.6c-1.8-.4-1.8-3 0-3.4a1.7 1.7 0 0 0 1-2.6c-.9-1.5.8-3.3 2.4-2.4 1 .6 2.3.1 2.6-1.1z"/><circle cx="12" cy="12" r="3"/></g></svg><div class="t " style="left:54.60px;top:745.90px;font-size:13px;line-height:13px;color:#fff;letter-spacing:-0.04px;-webkit-text-stroke:0.25px #fff">Administracija</div><svg class="a" style="left:25.50px;top:782.90px;" width="16.00" height="16.00" viewBox="0 0 24 24" ><g fill="none" stroke="#fff" stroke-width="2" stroke-linecap="round" stroke-linejoin="round"><path d="M13 2v7h6l-8 13v-7H5z" fill="#fff"/></g></svg><div class="t " style="left:54.60px;top:784.80px;font-size:13px;line-height:13px;color:#fff;letter-spacing:-0.04px;-webkit-text-stroke:0.25px #fff">Sustav</div><svg class="a" style="left:212.00px;top:782.90px;" width="16.00" height="16.00" viewBox="0 0 24 24" ><g fill="none" stroke="#fff" stroke-width="2.2" stroke-linecap="round" stroke-linejoin="round"><path d="M6 9l6 6 6-6"/></g></svg><div class="t " style="left:17.00px;top:1037.80px;font-size:13px;line-height:13px;color:#fff;-webkit-text-stroke:0.25px #fff">v1.3.71</div><svg class="a" style="left:209.50px;top:1035.50px;" width="17.00" height="17.00" viewBox="0 0 24 24" ><g fill="none" stroke="#fff" stroke-width="2" stroke-linecap="round" stroke-linejoin="round"><path d="M11 7l-5 5 5 5M17 7l-5 5 5 5"/></g></svg></body></html>
